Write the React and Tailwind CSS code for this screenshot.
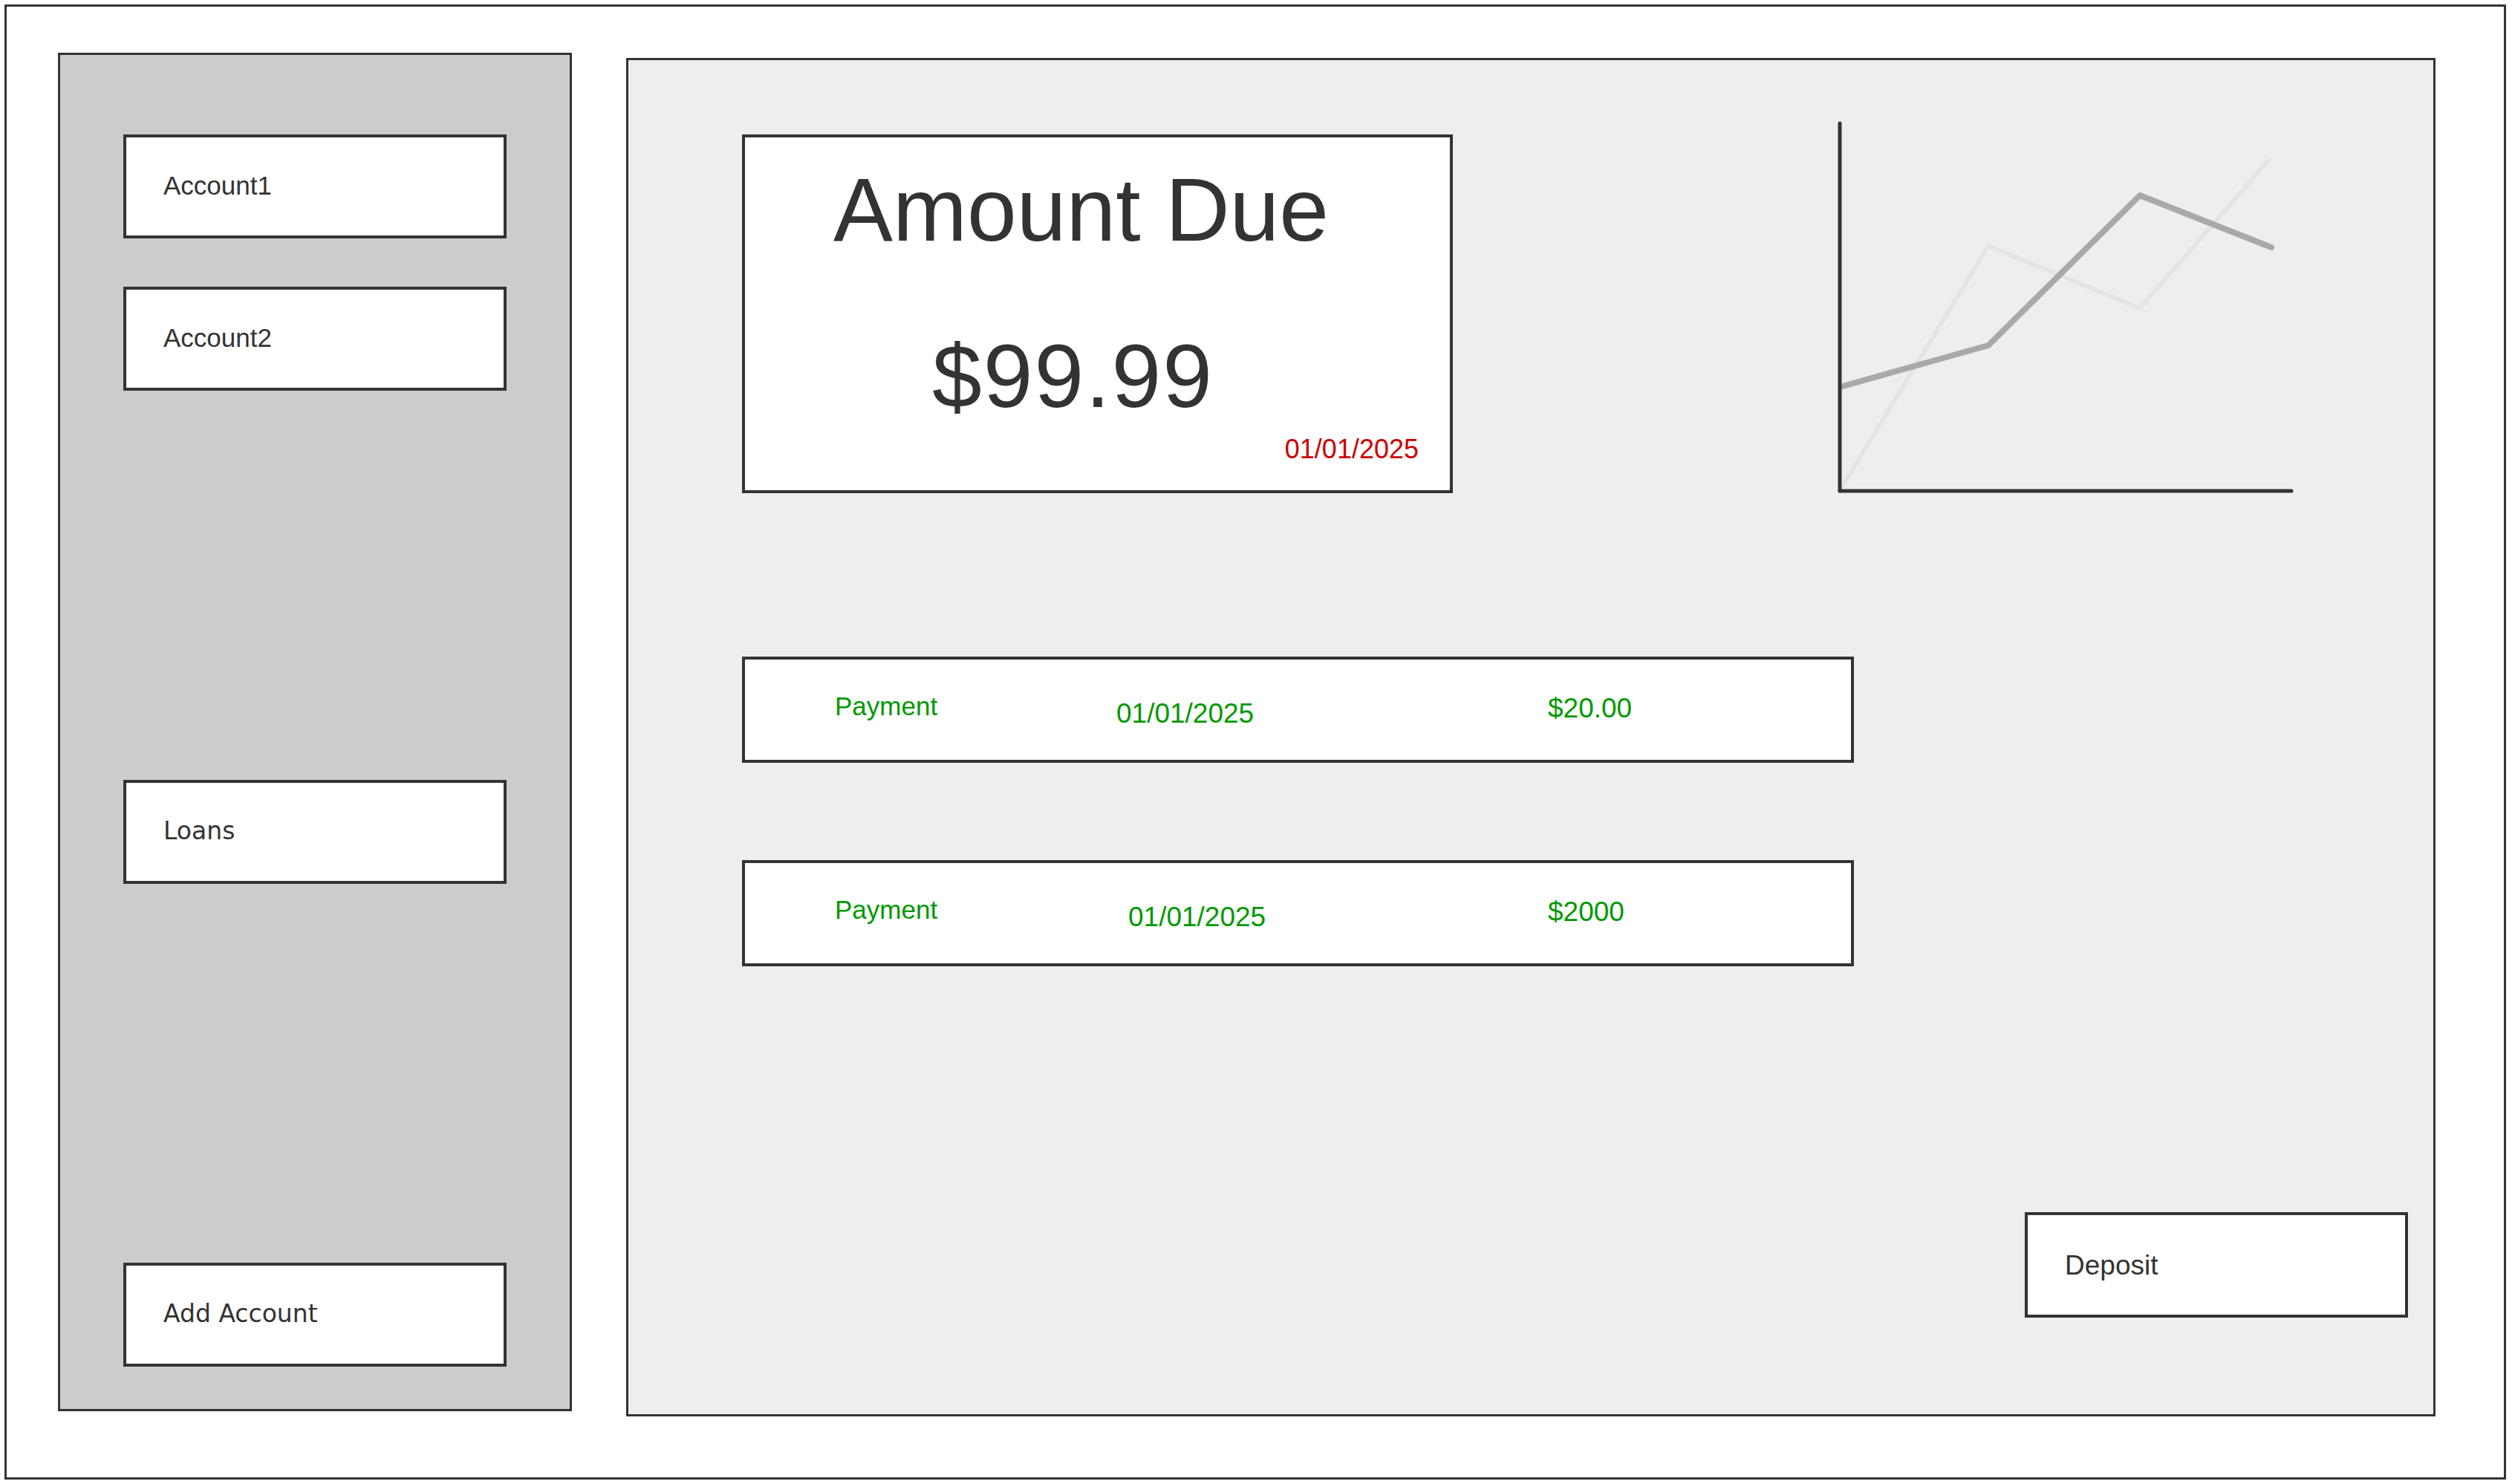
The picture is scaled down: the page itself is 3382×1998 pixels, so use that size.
const SANS = "font-['Liberation_Sans',Arial,sans-serif]";
const ROUND = "font-['DejaVu_Sans',sans-serif]";

function SideButton({ label, className = "", round = false }) {
  return (
    <div className={`w-[516px] h-[140px] border-4 border-[#333] bg-white flex items-center px-[50px] ${className}`}>
      <span className={`${round ? ROUND + " text-[33px]" : SANS + " text-[35px]"} text-[#333] leading-none mb-[3px]`}>{label}</span>
    </div>
  );
}

function PaymentRow({ date, amount, dateLeft, dateWidth, className = "" }) {
  return (
    <div className={`w-[1497px] h-[143px] border-4 border-[#333] bg-white flex items-center pl-[121px] text-[#009900] ${SANS} leading-none ${className}`}>
      <span className="text-[35px] mb-[10px]" style={{ width: dateLeft }}>Payment</span>
      <span className="text-[37px] mt-[10px]" style={{ width: dateWidth }}>{date}</span>
      <span className="text-[37px] mb-[4px]">{amount}</span>
    </div>
  );
}

function Chart() {
  return (
    <svg width="640" height="530" viewBox="0 0 640 530" className="ml-[504px] shrink-0">
      <polyline points="21,504 217,181 421,265 595,65" fill="none" stroke="#e4e4e4" strokeWidth="6" strokeLinejoin="round" strokeLinecap="round" />
      <polyline points="21,370 217,315 421,113 598,183" fill="none" stroke="#a9a9a9" strokeWidth="8" strokeLinejoin="round" strokeLinecap="round" />
      <line x1="17" y1="16" x2="17" y2="511" stroke="#333" strokeWidth="5" strokeLinecap="round" />
      <line x1="17" y1="511" x2="625" y2="511" stroke="#333" strokeWidth="5" strokeLinecap="round" />
    </svg>
  );
}

export default function App() {
  return (
    <div className="w-[3382px] h-[1998px] bg-white p-[6px]">
      <div className="w-[3368px] h-[1986px] border-[3px] border-[#333] flex items-start pl-[69px] pt-[62px]">
        {/* sidebar */}
        <div className="w-[692px] h-[1829px] border-[3px] border-[#333] bg-[#cccccc] flex flex-col pl-[85px] pt-[107px] pb-[57px]">
          <SideButton label="Account1" />
          <SideButton label="Account2" className="mt-[65px]" />
          <SideButton label="Loans" round className="mt-[524px]" />
          <SideButton label="Add Account" round className="mt-auto" />
        </div>

        {/* main panel */}
        <div className="ml-[73px] mt-[7px] w-[2436px] h-[1829px] border-[3px] border-[#333] bg-[#eeeeee] flex flex-col pl-[153px] pt-[69px]">
          <div className="flex items-start">
            <div className="mt-[31px] w-[957px] h-[483px] border-4 border-[#333] bg-white flex flex-col text-[#333]">
              <div className={`${SANS} text-[120px] leading-none text-center pr-[44px] mt-[37px]`}>Amount Due</div>
              <div className={`${SANS} text-[120px] leading-none text-center pr-[66px] mt-[104px] tracking-[2px]`}>$99.99</div>
              <div className={`${SANS} text-[36px] leading-none text-right pr-[42px] mt-[21px] text-[#cc0000]`}>01/01/2025</div>
            </div>
            <Chart />
          </div>

          <PaymentRow date="01/01/2025" amount="$20.00" dateLeft={379} dateWidth={581} className="mt-[204px]" />
          <PaymentRow date="01/01/2025" amount="$2000" dateLeft={395} dateWidth={565} className="mt-[131px]" />

          <div className="mt-auto self-end mr-[34px] mb-[130px] w-[516px] h-[142px] border-4 border-[#333] bg-white flex items-center px-[50px]">
            <span className={`${SANS} text-[37px] text-[#333] leading-none`}>Deposit</span>
          </div>
        </div>
      </div>
    </div>
  );
}
